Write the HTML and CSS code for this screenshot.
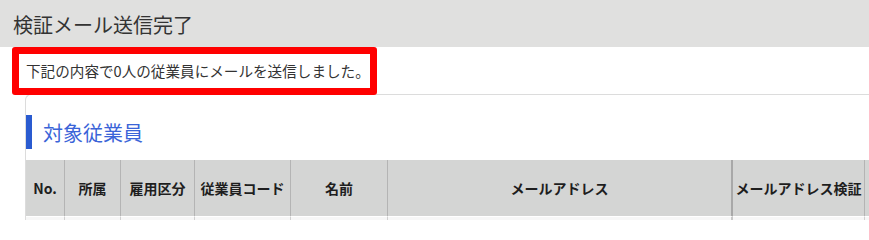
FILE: index.html
```html
<!DOCTYPE html>
<html lang="ja">
<head>
<meta charset="utf-8">
<title>検証メール送信完了</title>
<link rel="stylesheet" href="styles.css">
</head>
<body>
<header class="page-header">
  <h1 class="page-title">検証メール送信完了</h1>
</header>
<main class="content">
  <p class="notice">下記の内容で0人の従業員にメールを送信しました。</p>
  <section class="card">
    <h2 class="section-title">対象従業員</h2>
    <div class="grid">
      <div class="th">No.</div>
      <div class="th">所属</div>
      <div class="th">雇用区分</div>
      <div class="th">従業員コード</div>
      <div class="th">名前</div>
      <div class="th th-wide">メールアドレス</div>
      <div class="th">メールアドレス検証</div>
      <div class="th th-last"></div>
      <div class="td"></div>
      <div class="td"></div>
      <div class="td"></div>
      <div class="td"></div>
      <div class="td"></div>
      <div class="td td-wide"></div>
      <div class="td"></div>
      <div class="td td-last"></div>
    </div>
  </section>
</main>
</body>
</html>
```

FILE: styles.css
```css
html, body {
  margin: 0;
  padding: 0;
  background: #ffffff;
  overflow: hidden;
}
body {
  font-family: "Noto Sans CJK JP", "Noto Sans", sans-serif;
  color: #333333;
  width: 869px;
  height: 220px;
}
.page-header {
  background: #e0e0df;
  height: 47px;
  padding-left: 13px;
  box-sizing: border-box;
}
.page-title {
  margin: 0;
  font-size: 20px;
  font-weight: 400;
  line-height: 49px;
  color: #333333;
}
.content {
  padding-left: 12px;
}
.notice {
  position: relative;
  z-index: 1;
  margin: 0;
  width: 365px;
  height: 48px;
  box-sizing: border-box;
  border: 7px solid #ff0000;
  border-radius: 3px;
  background: #ffffff;
  padding-left: 7px;
  font-size: 14.6px;
  line-height: 34px;
  color: #333333;
  white-space: nowrap;
}
.card {
  margin: -1px 0 0 13px;
  border-top: 1px solid #dcdcdc;
  border-left: 1px solid #dcdcdc;
  border-radius: 6px 0 0 0;
  padding-top: 20px;
  height: 126px;
  box-sizing: border-box;
  overflow: hidden;
}
.section-title {
  margin: 0 0 11px 0;
  height: 34px;
  border-left: 6px solid #2a5bd0;
  padding-left: 11px;
  font-size: 20px;
  font-weight: 400;
  line-height: 35px;
  color: #3a64d8;
}
.grid {
  display: grid;
  grid-template-columns: 39px 56px 74px 96px 97px 345px 132px 1fr;
  grid-template-rows: 56px 4px;
}
.th {
  background: #d4d5d4;
  border-right: 1px solid #b4b4b4;
  box-sizing: border-box;
  display: flex;
  align-items: center;
  justify-content: center;
  font-size: 14px;
  font-weight: 700;
  color: #1e1e1e;
  white-space: nowrap;
  padding-bottom: 1px;
}
.th-wide {
  border-right: 2px solid #a8a8a8;
}
.th-last {
  border-right: none;
}
.td {
  background: #f7f7f7;
  border-right: 1px solid #d0d0d0;
  border-top: 1px solid #ffffff;
  box-sizing: border-box;
}
.td-wide {
  border-right: 2px solid #c8c8c8;
}
.td-last {
  border-right: none;
}
```
